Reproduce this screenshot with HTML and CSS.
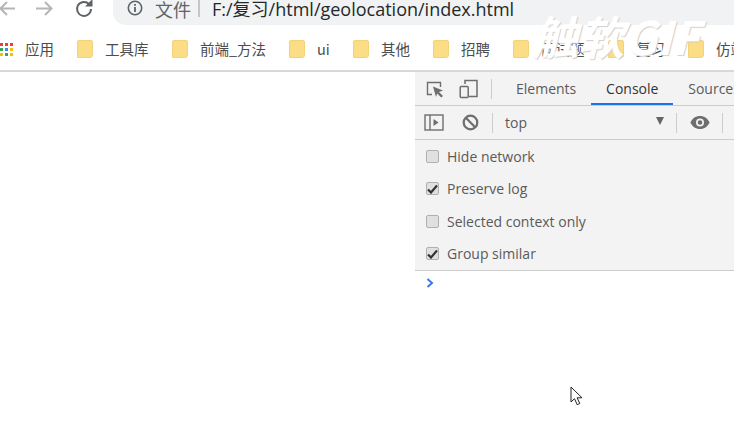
FILE: index.html
```html
<!DOCTYPE html>
<html lang="zh">
<head>
<meta charset="utf-8">
<title>geolocation</title>
<link rel="stylesheet" href="styles.css">
</head>
<body>
<header class="chrome">
  <div class="navrow">
    <svg class="nav back" width="24" height="24" viewBox="0 0 24 24"><path d="M18 8.500H4M10 2L3.500 8.500l6.500 6.500" fill="none" stroke="#b4b6b8" stroke-width="2"/></svg>
    <svg class="nav fwd" width="24" height="24" viewBox="0 0 24 24"><path d="M2 8.500h15M11 2l6.500 6.500-6.500 6.500" fill="none" stroke="#b4b6b8" stroke-width="2"/></svg>
    <svg class="nav reload" width="20" height="20" viewBox="0 0 20 20"><path d="M16 10a7 7 0 1 1-2-5" fill="none" stroke="#5f6368" stroke-width="2"/><path d="M17.500 0v7.500h-7.500z" fill="#5f6368"/></svg>
    <div class="omnibox">
      <svg class="info" width="16" height="16" viewBox="0 0 16 16"><circle cx="8" cy="8" r="6.700" fill="none" stroke="#5f6368" stroke-width="1.600"/><rect x="7.100" y="7" width="1.800" height="5" fill="#5f6368"/><rect x="7.100" y="4" width="1.800" height="1.800" fill="#5f6368"/></svg>
      <span class="scheme">文件</span>
      <span class="sep"></span>
      <span class="url">F:/复习/html/geolocation/index.html</span>
    </div>
  </div>
  <nav class="bookmarks">
    <span class="bm apps">
      <svg width="15" height="15" viewBox="0 0 15 15"><rect x="0" y="1" width="3" height="3" fill="#e94235"/><rect x="5" y="1" width="3" height="3" fill="#e94235"/><rect x="10" y="1" width="3" height="3" fill="#e94235"/><rect x="0" y="6" width="3" height="3" fill="#34a853"/><rect x="5" y="6" width="3" height="3" fill="#4285f4"/><rect x="10" y="6" width="3" height="3" fill="#fbbc05"/><rect x="0" y="11" width="3" height="3" fill="#fbbc05"/><rect x="5" y="11" width="3" height="3" fill="#34a853"/><rect x="10" y="11" width="3" height="3" fill="#fbbc05"/></svg>
      <span class="bm-label">应用</span>
    </span>
    <span class="bm w-tools"><i class="folder"></i><span class="bm-label">工具库</span></span>
    <span class="bm w-front"><i class="folder"></i><span class="bm-label">前端_方法</span></span>
    <span class="bm w-ui"><i class="folder"></i><span class="bm-label">ui</span></span>
    <span class="bm w-other"><i class="folder"></i><span class="bm-label">其他</span></span>
    <span class="bm w-hire"><i class="folder"></i><span class="bm-label">招聘</span></span>
    <span class="bm w-exam"><i class="folder"></i><span class="bm-label">面试题</span></span>
    <span class="bm w-review"><i class="folder"></i><span class="bm-label">复习</span></span>
    <span class="bm"><i class="folder"></i><span class="bm-label">仿站</span></span>
  </nav>
  <div class="watermark">触软GIF</div>
</header>
<main class="viewport">
  <div class="page"></div>
  <section class="devtools">
    <div class="tabs">
      <svg class="ico-inspect" width="19" height="18" viewBox="0 0 19 18"><path d="M6 14.500H1.500v-12h13V7" fill="none" stroke="#6e6e6e" stroke-width="1.400"/><path d="M7 6.500l10 4-4 1.400 4 4-1.800 1.600-4-4-1.200 3.500z" fill="#6e6e6e"/></svg>
      <svg class="ico-device" width="19" height="20" viewBox="0 0 19 20"><path d="M6 5V1.500h12v16h-8" fill="none" stroke="#6e6e6e" stroke-width="1.500"/><rect x="1.200" y="7.500" width="8" height="11" rx="1" fill="none" stroke="#6e6e6e" stroke-width="1.500"/></svg>
      <span class="vsep tab-sep"></span>
      <span class="tab t-elements">Elements</span>
      <span class="tab t-console">Console</span>
      <span class="tab t-sources">Sources</span>
    </div>
    <div class="filterbar">
      <svg class="ico-sidebar" width="20" height="17" viewBox="0 0 20 17"><rect x="1" y="1" width="18" height="15" fill="none" stroke="#6e6e6e" stroke-width="1.400"/><path d="M6 1v15" stroke="#6e6e6e" stroke-width="1.400"/><path d="M9.500 5l5 3.500-5 3.500z" fill="#6e6e6e"/></svg>
      <svg class="ico-clear" width="17" height="17" viewBox="0 0 17 17"><circle cx="8.500" cy="8.500" r="6.800" fill="none" stroke="#6e6e6e" stroke-width="2.200"/><path d="M3.800 3.800l9.400 9.400" stroke="#6e6e6e" stroke-width="2.200"/></svg>
      <span class="vsep f-sep1"></span>
      <span class="context">top</span>
      <span class="caret"></span>
      <span class="vsep f-sep2"></span>
      <svg class="ico-eye" width="20" height="13" viewBox="0 0 20 13"><path fill-rule="evenodd" d="M10 0c4.400 0 8 2.700 9.600 6.500C18 10.300 14.400 13 10 13S2 10.300.4 6.500C2 2.700 5.600 0 10 0zm0 2.500a4 4 0 1 0 0 8 4 4 0 0 0 0-8zm0 1.700a2.300 2.300 0 1 1 0 4.600 2.300 2.300 0 0 1 0-4.600z" fill="#6e6e6e"/></svg>
      <span class="vsep f-sep3"></span>
    </div>
    <div class="settings">
      <label class="opt"><i class="cb"></i><span>Hide network</span></label>
      <label class="opt"><i class="cb on"><svg width="11" height="10" viewBox="0 0 11 10"><path d="M1 5.500l3 3 6-7" fill="none" stroke="#333" stroke-width="2.200"/></svg></i><span>Preserve log</span></label>
      <label class="opt"><i class="cb"></i><span>Selected context only</span></label>
      <label class="opt"><i class="cb on"><svg width="11" height="10" viewBox="0 0 11 10"><path d="M1 5.500l3 3 6-7" fill="none" stroke="#333" stroke-width="2.200"/></svg></i><span>Group similar</span></label>
    </div>
    <div class="prompt"><svg width="8" height="10" viewBox="0 0 8 10"><path d="M1.500 1l4.500 4-4.500 4" fill="none" stroke="#3b78e7" stroke-width="2"/></svg></div>
    <svg class="cursor" width="14" height="20" viewBox="0 0 14 20"><path d="M1 1v15l3.500-3.300 2.700 6 2.600-1.200-2.700-5.700h4.900z" fill="#fff" stroke="#222" stroke-width="1"/></svg>
  </section>
</main>
</body>
</html>
```
FILE: styles.css
```css
* { box-sizing: border-box; }
html, body { margin: 0; height: 100%; overflow: hidden; background: #fff; }
body { width: 734px; height: 445px; font-family: "Open Sans", "Noto Sans CJK SC", sans-serif; }

.chrome { position: relative; height: 72px; border-bottom: 2px solid #d9d7da; overflow: hidden; }

.navrow { height: 33px; display: flex; align-items: flex-start; }
.nav { flex: none; }
.back { margin-left: -3px; }
.fwd { margin-left: 13px; }
.reload { margin-left: 17px; margin-top: -1px; }
.omnibox { flex: 1; height: 25px; margin-left: 18px; background: #f0f2f3; border-radius: 0 0 0 13px; display: flex; align-items: flex-start; padding-left: 14px; }
.info { flex: none; margin-top: 0; }
.scheme { margin-left: 12px; font-size: 18px; line-height: 18px; color: #5f6368; font-family: "Noto Sans CJK SC", sans-serif; }
.sep { width: 2px; height: 17px; background: #c4c6c8; margin-left: 7px; }
.url { margin-left: 12px; font-size: 18px; line-height: 18px; color: #25282b; white-space: nowrap; }

.bookmarks { height: 37px; display: flex; align-items: flex-start; white-space: nowrap; padding-top: 7px; }
.bm { flex: none; display: flex; align-items: center; }
.bm-label { font-size: 14.500px; line-height: 18px; color: #4a4d50; font-family: "Noto Sans CJK SC", sans-serif; }
.apps { width: 77px; }
.apps .bm-label { margin-left: 10px; }
.folder { display: block; flex: none; width: 16px; height: 18px; background: #fbdd85; border: 1px solid #f3d27a; border-radius: 2px 2px 3px 1px; margin-right: 12px; }
.w-tools { width: 95px; }
.w-front { width: 117px; }
.w-ui { width: 64px; }
.w-other { width: 80px; }
.w-hire { width: 80px; }
.w-exam { width: 95px; }
.w-review { width: 80px; }
.watermark { position: absolute; left: 532px; top: 7px; font-size: 46px; line-height: 56px; font-weight: 700; font-style: italic; color: #fff; white-space: nowrap; text-shadow: 1px 1px 1px #cfcfcf; font-family: "Noto Sans CJK SC", sans-serif; }

.viewport { display: flex; height: 373px; }
.page { width: 415px; flex: none; }
.devtools { position: relative; flex: 1; overflow: hidden; }

.tabs, .filterbar { display: flex; align-items: center; background: #f3f3f3; border-bottom: 1px solid #ccc; white-space: nowrap; }
.tabs { height: 34px; }
.filterbar { height: 34px; }
.vsep { flex: none; width: 1px; height: 20px; background: #ccc; }

.ico-inspect { margin-left: 11px; flex: none; }
.ico-device { margin-left: 14px; flex: none; }
.tab-sep { margin-left: 13px; }
.tab { font-size: 14px; line-height: 33px; height: 33px; color: #5a5a5a; flex: none; }
.t-elements { margin-left: 24px; }
.t-console { width: 82px; margin-left: 15px; text-align: center; color: #333; border-bottom: 2px solid #1a73e8; }
.t-sources { margin-left: 15px; }

.ico-sidebar { margin-left: 9px; flex: none; }
.ico-clear { margin-left: 18px; flex: none; }
.f-sep1 { margin-left: 13px; }
.context { font-size: 14px; color: #5a5a5a; margin-left: 12px; width: 151px; }
.caret { width: 0; height: 0; border: 4.500px solid transparent; border-top: 8px solid #666; border-bottom: 0; margin-top: -4px; flex: none; }
.f-sep2 { margin-left: 12px; }
.ico-eye { margin-left: 13px; flex: none; }
.f-sep3 { margin-left: 12px; }

.settings { height: 131px; background: #f3f3f3; border-bottom: 1px solid #ccc; display: flex; flex-direction: column; }
.opt { height: 32.500px; display: flex; align-items: center; padding-left: 11px; font-size: 14px; color: #5a5a5a; }
.opt span { margin-left: 8px; }
.cb { flex: none; width: 13px; height: 13px; border: 1px solid #b0b0b0; border-radius: 2px; background: #e0e0e0; display: flex; align-items: center; justify-content: center; }
.prompt { height: 24px; padding: 2px 0 0 11px; }
.prompt svg { display: block; margin-top: 5px; }
.cursor { position: absolute; left: 155px; top: 314px; }
```
